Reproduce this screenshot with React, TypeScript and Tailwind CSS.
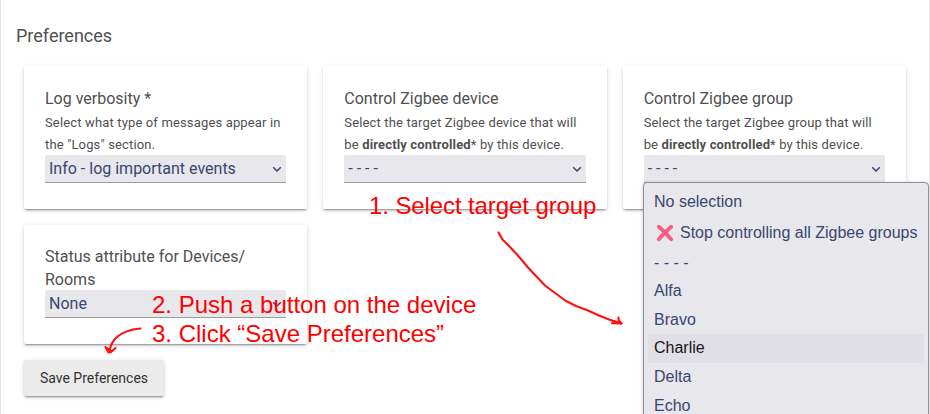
import React from 'react';

const elevation =
  'shadow-[0_3px_1px_-2px_rgba(0,0,0,0.2),0_2px_2px_0_rgba(0,0,0,0.14),0_1px_5px_0_rgba(0,0,0,0.12)]';

function Select({ value }: { value: string }) {
  return (
    <div className="-mt-px flex h-7 items-center justify-between rounded-t-[2px] border-b border-[#9b9ba0] bg-[#e8e7ec] pr-1 pl-1 text-base text-[#394670]">
      <span className="whitespace-pre">{value}</span>
      <svg width="10" height="8" viewBox="0 0 10 8" fill="none" stroke="#394670" strokeWidth="1.5">
        <path d="M1.2 2.2 5 6l3.8-3.8" />
      </svg>
    </div>
  );
}

function Card({
  title,
  children,
  value,
  className,
}: {
  title: string;
  children?: React.ReactNode;
  value: string;
  className: string;
}) {
  return (
    <section className={`rounded-[2px] bg-white px-[21px] ${elevation} ${className}`}>
      <h2 className="text-base leading-[23px]">{title}</h2>
      {children && (
        <p className="pt-0.5 text-[13px] leading-[22px] tracking-[0.15px] whitespace-nowrap">{children}</p>
      )}
      <Select value={value} />
    </section>
  );
}

const options = ['Alfa', 'Bravo', 'Charlie', 'Delta', 'Echo'];

function GroupMenu() {
  return (
    <div className="absolute top-[182px] left-[642px] h-[250px] w-[286px] rounded-[4px] border border-[#8f8f94] bg-[#e8e7ec] px-1 pt-1 font-['Liberation_Sans',Arial,sans-serif] text-base text-[#394670] shadow-[0_1px_4px_rgba(0,0,0,0.2)]">
      <div className="flex h-[29px] items-center px-1.5">No selection</div>
      <div className="flex h-[33px] items-center px-1.5 whitespace-nowrap">
        <svg className="mr-1.5 ml-0.5 shrink-0" width="18" height="18" viewBox="0 0 18 18" fill="none" stroke="#fb5c82" strokeWidth="3.8" strokeLinecap="round">
          <path d="M2.8 2.8 Q9 8 15.2 15.2M15.2 2.8 Q8 9 2.8 15.2" />
        </svg>
        <span>Stop controlling all Zigbee groups</span>
      </div>
      <div className="flex h-[27.6px] items-center px-1.5 whitespace-pre">- - - -</div>
      {options.map((name) => (
        <div
          key={name}
          className={`flex h-[28.7px] items-center px-1.5 ${name === 'Charlie' ? 'bg-[#e0dfe5] text-[#15141a]' : ''}`}
        >
          {name}
        </div>
      ))}
    </div>
  );
}

function Annotations() {
  return (
    <div className="pointer-events-none absolute inset-y-0 -left-px w-[930px] font-['Liberation_Sans',Arial,sans-serif] text-2xl leading-[29px] whitespace-nowrap text-[#fd0000]">
      <p className="absolute top-[191px] left-[369px] tracking-[-0.1px]">1. Select target group</p>
      <p className="absolute top-[290px] left-[152px]">
        2. Push a button on the device
        <br />
        3. Click “Save Preferences”
      </p>
      <svg className="absolute inset-0" width="930" height="414" fill="none" stroke="#fd1010" strokeWidth="2.1" strokeLinecap="round" strokeLinejoin="round">
        <path d="M498.5 232.5 L502.5 239.5 L509 246 L517 254.5 L523 261.5 L528 267.5 L536 276 L545 285.5 L555 293 L566 301 L576 306 L588 310.5 L599 315.5 L609 319.5 L621.5 323.5" />
        <path d="M618.4 317.5 L618.8 320.5 L621.5 323.5 L612 323.3 M613 321 L619 323" />
        <path d="M140.5 328.5 Q125 330 117 337 Q111 342 109.5 351" />
        <path d="M105.5 347 L108.5 352.5 L111 352 L115.5 348 M106 347.5 L110.5 350.5" />
      </svg>
    </div>
  );
}

export default function App() {
  return (
    <main className="relative h-[414px] w-[930px] overflow-hidden border-x border-[#e4e4e6] bg-white font-[Roboto,sans-serif] text-[#505050]">
      <h1 className="pt-6 pl-[15px] text-lg leading-6">Preferences</h1>
      <div className="mt-[18px] ml-[23px] grid w-[882px] grid-cols-3 gap-4">
        <Card title="Log verbosity *" value="Info - log important events" className="h-[143px] pt-[21px]">
          Select what type of messages appear in
          <br />
          the "Logs" section.
        </Card>
        <Card title="Control Zigbee device" value="- - - -" className="h-[143px] pt-[21px]">
          Select the target Zigbee device that will
          <br />
          be <b>directly controlled</b>* by this device.
        </Card>
        <Card title="Control Zigbee group" value="- - - -" className="h-[143px] pt-[21px]">
          Select the target Zigbee group that will
          <br />
          be <b>directly controlled</b>* by this device.
        </Card>
        <Card title="Status attribute for Devices/ Rooms" value="None" className="h-[119px] pt-5" />
      </div>
      <button className={`mt-4 ml-[23px] h-9 w-[140px] rounded-[2px] bg-[#ebebeb] text-sm text-[#333] ${elevation}`}>
        Save Preferences
      </button>
      <GroupMenu />
      <Annotations />
    </main>
  );
}
